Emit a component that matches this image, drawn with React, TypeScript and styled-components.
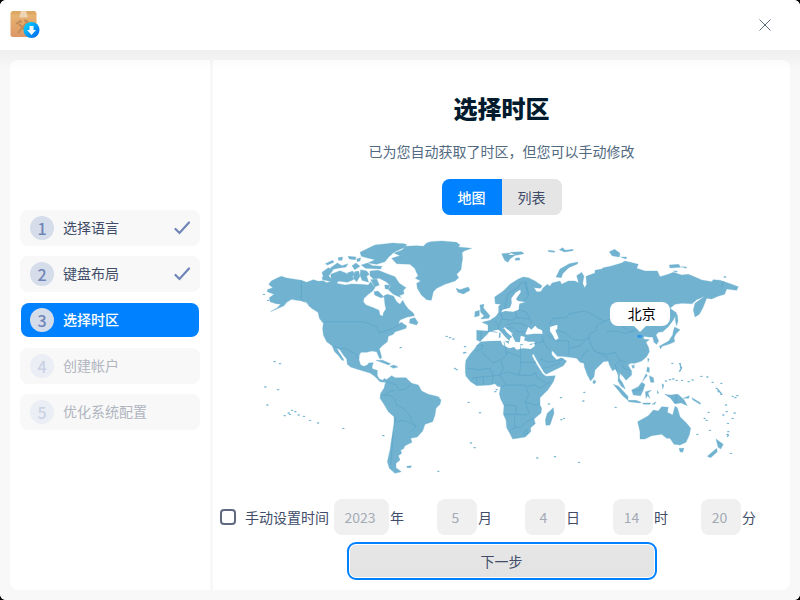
import React, { useState } from 'react';
import styled, { createGlobalStyle, css } from 'styled-components';

const GlobalStyle = createGlobalStyle`
  * { box-sizing: border-box; }
  body {
    margin: 0;
    background: #000;
    color: #414d68;
    font-family: "Noto Sans CJK SC", "Noto Sans", sans-serif;
    font-size: 14px;
    line-height: 20px;
  }
  button, input { font: inherit; color: inherit; }
`;

const Window = styled.div`
  display: flex;
  flex-direction: column;
  min-height: 100vh;
  border-radius: 6px;
  background: #f8f8f8;
  overflow: hidden;
`;

const TitleBar = styled.header`
  display: flex;
  align-items: center;
  justify-content: space-between;
  height: 50px;
  padding: 0 10px;
  background: #fff;
`;

const CloseButton = styled.button`
  display: flex;
  align-items: center;
  justify-content: center;
  width: 50px;
  height: 50px;
  padding: 0;
  border: 0;
  background: none;
`;

const Body = styled.div`
  display: flex;
  flex: 1;
  gap: 3px;
  padding: 10px;
  background: linear-gradient(#efefef, #f8f8f8 20px);
`;

const panel = css`
  background: linear-gradient(#fbfbfb, #fff 10px);
`;

const Sidebar = styled.nav`
  ${panel}
  display: flex;
  flex-direction: column;
  justify-content: center;
  flex: 0 0 200px;
  padding: 0 10px 10px;
  border-radius: 8px 0 0 8px;
`;

const StepList = styled.ol`
  display: flex;
  flex-direction: column;
  gap: 10px;
  margin: 0;
  padding: 0;
  list-style: none;
`;

type StepState = 'done' | 'current' | 'pending';

const StepItem = styled.li<{ $state: StepState }>`
  display: flex;
  align-items: center;
  height: 36px;
  padding: 0 10px;
  border-radius: 8px;
  background: #f8f8f8;
  color: ${(p) => (p.$state === 'pending' ? '#b0b5bf' : '#414d68')};
  ${(p) =>
    p.$state === 'current' &&
    css`
      height: 34px;
      margin: 1px;
      padding: 0 9px;
      background: #0081ff;
      color: #fff;
      font-weight: 500;
    `}
`;

const StepNumber = styled.span<{ $state: StepState }>`
  display: flex;
  align-items: center;
  justify-content: center;
  width: 24px;
  height: 24px;
  margin-right: 9px;
  padding-bottom: 1px;
  border-radius: 50%;
  font-size: 16px;
  font-weight: 500;
  background: ${(p) => (p.$state === 'pending' ? '#ebeef5' : '#d5dcea')};
  color: ${(p) => (p.$state === 'pending' ? '#cad2e4' : '#6f85b8')};
`;

const StepLabel = styled.span`
  flex: 1;
  padding-bottom: 2px;
`;

const Content = styled.main`
  ${panel}
  display: flex;
  flex-direction: column;
  align-items: center;
  flex: 1;
  min-width: 0;
  padding: 30px 7px 10px;
  border-radius: 0 8px 8px 0;
`;

const Title = styled.h1`
  margin: 0 0 15px;
  font-size: 24px;
  line-height: 36px;
  font-weight: 900;
  color: #001a2e;
`;

const Subtitle = styled.p`
  margin: 0 0 18px;
  color: #526a7f;
`;

const Segmented = styled.div`
  display: flex;
  height: 36px;
  margin-bottom: 20px;
  border-radius: 8px;
  background: #e5e5e5;
  overflow: hidden;
`;

const Segment = styled.button<{ $active: boolean }>`
  width: 60px;
  padding: 0;
  border: 0;
  font-weight: ${(p) => (p.$active ? 500 : 400)};
  background: ${(p) => (p.$active ? '#0081ff' : '#e5e5e5')};
  color: ${(p) => (p.$active ? '#fff' : '#414d68')};
`;

const MapFrame = styled.div`
  position: relative;
  align-self: stretch;
  margin: 0 39px 19px;
`;

const MapSvg = styled.svg`
  display: block;
  width: 100%;
  height: auto;
`;

const Pin = styled.div`
  position: absolute;
  left: 78.5%;
  top: 39.6%;
  display: flex;
  flex-direction: column;
  align-items: center;
  transform: translate(-50%, -100%);
`;

const PinLabel = styled.span`
  width: 60px;
  border-radius: 8px;
  padding: 1px 0 3px 4px;
  background: #fff;
  color: #000;
  text-align: center;
`;

const PinTip = styled.span`
  border: 6px solid transparent;
  border-top-color: #fff;
  border-bottom: 0;
`;

const DateForm = styled.form`
  display: flex;
  align-items: center;
  align-self: stretch;
  height: 36px;
  margin-bottom: 7px;
`;

const ManualToggle = styled.label`
  display: flex;
  align-items: center;
  gap: 9px;
  margin-right: 5px;
  white-space: nowrap;
`;

const CheckBox = styled.input`
  appearance: none;
  width: 16px;
  height: 16px;
  margin: 0;
  border: 2px solid #5f6980;
  border-radius: 4px;
  background: #fff;
`;

const Field = styled.label`
  display: flex;
  align-items: center;
  gap: 1px;
  margin-right: 33px;
  &:last-child { margin-right: 0; }
`;

const FieldInput = styled.input<{ $wide?: boolean }>`
  width: ${(p) => (p.$wide ? 55 : 40)}px;
  height: 36px;
  padding: 0 3px 0 0;
  border: 0;
  border-radius: 8px;
  background: #f0f0f0;
  color: #a4aab6;
  text-align: center;
`;

const NextButton = styled.button`
  width: 310px;
  height: 38px;
  padding: 0;
  border: 2px solid #0081ff;
  border-radius: 9px;
  background: linear-gradient(#e6e6e6, #e3e3e3);
  box-shadow: inset 0 0 0 1px #fff;
`;

function InstallerIcon() {
  return (
    <svg width="30" height="30" viewBox="0 0 30 30" aria-hidden="true">
      <defs>
        <linearGradient id="box" x1="0" y1="0" x2="0" y2="1">
          <stop offset="0" stopColor="#e8b873" />
          <stop offset="1" stopColor="#dc9765" />
        </linearGradient>
        <linearGradient id="badge" x1="0" y1="0" x2="1" y2="1">
          <stop offset="0" stopColor="#00dcff" />
          <stop offset="1" stopColor="#0062ee" />
        </linearGradient>
      </defs>
      <rect x="0.5" y="1" width="26" height="26" rx="2.5" fill="url(#box)" />
      <path d="M2.500 1H24.500L26.500 4.500H0.500Z" fill="#dca964" />
      <path d="M11 1h5l1.500 5v2l-1-1-1 1-1-1-1 1-1-1-1 1-1-1-1 1V6z" fill="#eed3b5" />
      <g fill="none" stroke="#c08a58" strokeWidth="1.800">
        <path d="M8 23 17 12M9 14l7 7" />
        <path d="M6 14l4-3 2 1M14 10.500q4 0 5 4" />
      </g>
      <circle cx="21.500" cy="20" r="8" fill="url(#badge)" />
      <path d="M19.500 16h4v4H26l-4.500 5L17 20h2.500z" fill="#f4faff" />
    </svg>
  );
}

function CheckIcon() {
  return (
    <svg width="16" height="14" viewBox="0 0 16 14" fill="none" aria-hidden="true">
      <path d="M1.500 8 5.500 12 15 1.500" stroke="#6f85b8" strokeWidth="2.200" strokeLinecap="round" />
    </svg>
  );
}

const land = [
  // North America
  'M64 124L80 129 104 133 124 136 140 142 160 134 175 139 190 137 200 143 215 138 235 146 255 150 275 147 300 148 325 150 332 140 345 158 338 168 325 178 312 190 310 200 318 210 340 218 357 226 360 240 368 244 371 232 378 222 375 210 373 192 372 182 382 178 400 183 410 200 420 208 428 196 436 210 445 222 460 234 463 242 440 247 420 255 415 266 425 262 432 268 440 272 438 280 420 286 405 290 400 298 385 304 382 320 366 333 358 342 362 355 365 368 360 372 354 360 350 350 335 348 320 352 303 352 298 360 297 375 302 390 312 394 322 390 326 384 340 383 336 396 338 402 352 406 352 422 358 432 368 436 374 430 380 436 374 442 360 440 350 430 342 422 330 414 310 408 290 402 272 396 262 388 260 372 250 360 240 345 230 338 236 350 244 362 252 376 246 376 236 362 224 350 216 332 200 320 190 300 188 280 190 265 178 250 174 232 158 222 150 210 138 200 124 197 110 196 95 193 80 202 72 212 50 222 32 230 52 218 62 208 48 206 30 200 28 188 42 178 22 170 22 164 38 158 26 148 34 138 50 130Z',
  'M180 250L196 258 196 266 186 260ZM142 202L150 206 158 222 148 214ZM156 208L168 216 166 222ZM450 252L464 248 474 262 470 270 448 264Z',
  // Canadian Arctic
  'M300 52L320 42 345 30 400 24 440 28 436 36 402 52 386 66 375 80 350 88 324 84 345 74 326 70 304 64Z',
  'M330 108L355 106 385 118 405 125 418 145 438 158 430 166 432 176 418 182 424 188 400 178 385 164 392 152 378 140 358 130 340 132 330 122Z',
  'M212 118L240 107 262 116 276 112 280 134 262 142 235 138 214 134ZM186 112L205 98 220 104 206 122 190 126ZM196 86L218 76 222 82 202 90ZM212 98L232 84 246 92 264 86 258 96 234 100 214 104ZM264 64L288 66 286 74 268 72ZM290 72L302 68 300 78 292 80ZM276 92L288 84 300 94 284 104ZM304 90L322 84 338 92 366 94 362 102 316 100ZM284 110L296 108 300 124 290 140 280 130ZM302 104L320 108 328 118 320 124 326 142 306 136 300 120ZM332 134L350 132 358 150 344 156ZM342 170L354 168 372 186 362 188 344 180ZM374 150L390 150 386 162 376 162ZM234 68L248 66 246 76 236 76Z',
  'M186 126L206 122 216 134 236 138 230 144 206 138 188 134ZM262 114L278 108 284 118 276 126Z',
  // Greenland and Iceland
  'M395 70L420 62 402 54 425 46 438 34 470 32 490 34 500 24 512 20 545 18 590 22 600 30 595 36 635 40 612 48 606 54 608 70 605 88 603 104 590 118 596 128 585 138 555 148 530 160 520 170 514 196 500 194 484 180 472 160 470 145 482 138 466 130 474 122 464 100 450 88 430 87 410 86Z',
  'M588 160L600 164 625 156 630 166 610 177 594 172ZM420 26L432 26 438 32 420 38Z',
  // South America
  'M378 435L395 422 405 428 438 428 455 445 475 450 485 468 505 478 535 485 543 495 540 508 528 520 525 540 518 560 495 568 488 588 472 606 452 610 456 622 435 632 430 642 422 645 425 655 415 662 420 675 408 685 408 698 424 710 405 715 388 700 382 680 390 645 395 610 402 575 402 545 385 530 372 508 360 490 362 475 372 460Z',
  'M348 376L368 376 392 386 386 390 364 382ZM390 394L402 390 414 396 400 400ZM360 362L366 368M440 694L454 692 452 698 442 698Z',
  // Europe, Asia and Africa
  'M650 286L684 288 684 270 666 262 690 256 708 244 716 232 716 214 722 208 706 206 704 186 730 168 750 148 775 132 790 126 805 128 825 138 846 152 842 160 822 158 830 170 842 170 850 158 862 148 870 154 876 144 900 138 905 148 925 138 945 138 956 144 950 122 965 112 972 124 968 145 974 158 980 148 978 124 1005 114 1005 106 1025 102 1030 98 1052 94 1085 84 1095 78 1135 88 1130 100 1155 108 1192 108 1200 125 1225 118 1240 112 1265 120 1285 118 1310 128 1325 135 1355 140 1360 134 1380 136 1398 142 1435 155 1430 166 1400 162 1394 178 1374 184 1355 192 1340 190 1328 220 1318 238 1305 246 1300 225 1305 205 1334 184 1310 194 1296 206 1265 205 1245 208 1230 220 1250 234 1240 255 1225 275 1208 290 1195 292 1188 300 1196 318 1190 328 1182 322 1178 306 1165 306 1152 304 1150 312 1168 314 1158 322 1166 338 1168 350 1160 365 1145 378 1125 385 1112 385 1104 390 1115 408 1115 420 1098 436 1090 425 1080 415 1078 430 1088 444 1096 462 1084 454 1074 438 1075 415 1065 402 1058 408 1048 390 1045 378 1030 380 1005 405 1002 425 992 438 982 420 973 395 972 385 960 382 950 370 930 367 905 364 892 364 880 350 874 346 876 360 890 374 904 368 920 378 910 392 890 402 858 418 852 412 832 378 820 356 816 362 830 388 848 416 858 424 886 422 880 440 864 464 840 488 840 510 845 520 843 534 822 552 826 566 812 578 812 590 796 606 758 612 752 600 740 578 738 555 730 538 732 512 722 492 718 476 722 455 712 454 705 446 690 450 650 452 632 440 618 424 616 412 616 390 618 375 630 358 645 340 650 332 662 320 650 315Z',
  // British Isles and Arctic archipelagos
  'M660 210L672 208 670 218 676 226 690 242 686 250 662 252 672 242 662 232ZM645 230L658 226 658 242 644 246Z',
  'M725 56L752 54 745 60 766 60 750 72 744 82 734 76ZM750 52L785 50 792 56 768 61ZM766 70L778 68 780 75 766 76ZM864 46L884 48 884 52 866 50ZM898 44L908 38 916 46 940 43 938 47 914 51ZM888 126L900 102 928 86 954 81 952 87 926 98 908 116 904 128ZM1048 50L1064 43 1080 55 1078 66 1056 62ZM1082 66L1100 66 1098 72ZM1228 90L1256 88 1262 97 1230 99ZM1264 95L1280 96 1278 100ZM1240 108L1252 108 1250 112ZM1390 126L1396 123 1398 128Z',
  // East Asia
  'M1246 235L1252 240 1254 258 1250 272 1246 258ZM1244 276L1260 284 1248 296 1242 308 1244 320 1226 328 1206 334 1202 342 1198 334 1226 318 1238 300 1240 288ZM1163 370L1168 372 1164 382ZM1114 392L1124 390 1120 398Z',
  'M1162 396L1168 398 1168 412 1160 410ZM1168 422L1180 428 1182 442 1172 442ZM1158 416L1162 422 1148 438ZM1002 434L1008 440 1004 446 998 444Z',
  // Indonesia and New Guinea
  'M1060 448L1076 454 1104 484 1104 496 1088 482ZM1104 496L1128 496 1144 502 1140 504 1106 500ZM1115 465L1135 455 1145 442 1155 448 1150 465 1142 482 1120 480ZM1156 470L1174 466 1164 474 1170 490 1162 482 1158 490ZM1148 504L1172 504 1170 508 1150 508ZM1176 508L1188 500 1184 508ZM1192 466L1196 474 1192 476ZM1206 446L1212 450 1208 462ZM1214 478L1230 480 1254 478 1272 494 1282 512 1264 504 1244 506 1232 490ZM1270 490L1288 482 1286 490ZM1296 488L1322 504 1320 508 1298 494Z',
  // Australia, New Zealand and Madagascar
  'M1133 560L1165 542 1180 525 1195 528 1205 515 1225 517 1222 532 1238 540 1245 514 1252 518 1260 545 1280 565 1292 580 1288 600 1278 622 1260 630 1242 628 1230 610 1220 610 1205 598 1175 602 1155 612 1140 612 1140 590ZM1257 640L1272 640 1268 652 1260 650Z',
  'M1368 612L1390 628 1382 642 1374 636ZM1370 640L1372 650 1352 668 1342 664ZM880 518L882 535 870 570 858 571 856 555 862 535Z',
].join('');

const seas = [
  // Mediterranean
  'M660 320L668 312 682 298 688 290 712 284 722 286 734 277 744 284 760 298 766 318 780 322 782 302 795 306 792 316 805 320 824 320 824 334 812 342 790 340 770 344 762 336 748 340 728 330 722 317 690 318Z',
  // Black Sea and Caspian
  'M796 296L805 276 814 284 826 272 832 280 846 286 848 296 822 296 800 299ZM870 276L892 269 892 282 886 286 896 310 886 316 878 300 870 288Z',
  // Baltic
  'M781 164L768 172 754 190 755 205 750 218 728 224 724 232 736 228 760 230 776 224 778 206 796 201 774 198 768 192 782 172Z',
].join('');

const mediterraneanIslands =
  'M716 284L732 280 740 292 757 306 750 310 748 318 734 304 724 292ZM734 318L747 318 746 326ZM718 292L722 294 721 308 716 308ZM780 328L790 328 788 331 780 331ZM808 328L818 325 814 331ZM754 296L776 298 772 308 776 322 766 320Z';

const borders =
  'M124 136V197L138 202 150 214M194 260H305L322 264 350 276 358 294 376 288 398 280 416 270M222 334L240 340 262 342 276 352 286 356 296 372' +
  'M378 440L410 450 416 466 438 462 452 446M362 480L390 482 404 492 410 510 430 520 448 540 454 556 468 572 454 590M408 545L400 580 396 640 392 690M410 560L430 556 448 562 468 574M372 480L388 470 404 466' +
  'M650 332L668 330 668 340 648 350M664 350L700 384 722 374 740 360 732 320M722 374L730 400 720 420M782 334V400L774 420M782 382H828M740 350L782 366M690 400L700 424 696 446M620 400L660 404 690 400M636 430L660 426 690 424 720 420 740 410 774 420 810 422 830 412M650 426V448M670 426V448M720 420L738 450 724 456M738 450H796L806 480 796 500 806 530M732 510L768 512 768 538 732 538M768 538L800 540 812 528M764 540V580L750 584M764 576L780 578 800 560 822 550M796 500L830 512 840 504M800 454L824 450 840 460 872 440M826 412L834 430 860 444M790 592L800 584 804 594 794 598Z' +
  'M664 288L662 314M684 288L712 292M704 258L716 270 714 284M722 232L728 252 716 270M728 252L756 256 770 248 768 230M740 270L760 264 786 266 800 274M740 280L760 278 772 290 796 290M770 248L810 252 816 264M776 224L800 232 810 252M792 200L806 180 798 140 780 146 772 160M770 160L744 176 738 200 734 222M796 140L802 180' +
  'M868 268L878 250 920 248 926 238 950 232 976 228 1000 240 1020 252 1034 258 1052 252 1110 290 1150 280 1170 262M1034 258L1010 272 1008 288 990 296 986 310 998 340 1010 352 1040 358 1066 352 1080 376 1100 382M892 286L916 294 940 314 966 316 990 308M1040 290L1070 288 1094 294 1120 290M862 300L890 318 924 316 928 340 924 360M930 340L960 332 976 316M960 376L976 350 988 344M820 326L850 320 862 340 876 350M840 370L860 380 880 380 912 372M846 304L852 322M848 400L880 392 900 384M1000 346L1040 366 1048 380M1080 376L1066 390 1074 420M1084 384L1094 402 1110 406M1390 138L1386 156M1118 468L1140 464 1150 450M1248 478V506';

const islets = [
  [12, 178], [24, 196], [44, 380], [60, 386], [16, 456], [54, 464], [22, 510], [74, 542], [86, 534], [96, 526], [106, 530], [132, 544], [150, 556], [174, 564], [90, 538], [116, 540], [250, 580], [370, 602], [422, 338],
  [560, 304], [570, 308], [580, 312], [585, 400], [590, 404], [615, 335], [612, 354], [616, 352], [626, 502], [660, 533], [633, 624], [644, 638], [535, 709], [867, 507], [903, 488], [904, 554], [912, 550], [832, 669], [885, 665], [957, 682],
  [706, 470], [710, 464], [973, 472], [970, 498], [1067, 517], [1120, 398], [1237, 385], [1260, 386], [1263, 398], [1218, 438], [1230, 434], [1240, 432], [1250, 436], [1266, 436], [1286, 440], [1298, 435], [1324, 424], [1342, 426], [1358, 442], [1384, 445],
  [1370, 460], [1376, 470], [1384, 478], [1418, 484], [1432, 482], [1426, 488], [1398, 510], [1400, 530], [1390, 540], [1424, 534], [1418, 550], [1404, 565], [1334, 550], [1340, 556], [1346, 532], [1350, 586], [1405, 590], [1402, 598], [1413, 655], [1312, 598],
];

function WorldMap() {
  return (
    <MapSvg viewBox="-3 0 1455 735" role="img" aria-label="世界地图">
      <g fill="#70b2d0">
        <path d={land} stroke="#70b2d0" />
        <path d={seas} fill="#fff" />
        <path d={mediterraneanIslands} />
        {islets.map(([x, y]) => (
          <ellipse key={`${x}-${y}`} cx={x} cy={y} rx="4" ry="2" />
        ))}
        <path d="M1260 388L1264 400 1258 410M1372 462L1386 478M1406 598L1402 606" fill="none" stroke="#70b2d0" strokeWidth="4" />
      </g>
      <path d={borders} fill="none" stroke="#5aa3c8" strokeWidth="2" />
      <ellipse cx="1139" cy="304" rx="8" ry="5" fill="#2f97e8" />
    </MapSvg>
  );
}

const steps: { label: string; state: StepState }[] = [
  { label: '选择语言', state: 'done' },
  { label: '键盘布局', state: 'done' },
  { label: '选择时区', state: 'current' },
  { label: '创建帐户', state: 'pending' },
  { label: '优化系统配置', state: 'pending' },
];

const fields = [
  { value: '2023', unit: '年', wide: true },
  { value: '5', unit: '月' },
  { value: '4', unit: '日' },
  { value: '14', unit: '时' },
  { value: '20', unit: '分' },
];

export default function App() {
  const [manual, setManual] = useState(false);

  return (
    <>
      <GlobalStyle />
      <Window>
        <TitleBar>
          <InstallerIcon />
          <CloseButton type="button" aria-label="关闭">
            <svg width="12" height="12" viewBox="0 0 12 12" aria-hidden="true">
              <path d="M0.500 0.500 11.500 11.500M11.500 0.500 0.500 11.500" stroke="#5c6b80" />
            </svg>
          </CloseButton>
        </TitleBar>
        <Body>
          <Sidebar>
            <StepList>
              {steps.map((step, i) => (
                <StepItem
                  key={step.label}
                  $state={step.state}
                  aria-current={step.state === 'current' ? 'step' : undefined}
                >
                  <StepNumber $state={step.state}>{i + 1}</StepNumber>
                  <StepLabel>{step.label}</StepLabel>
                  {step.state === 'done' && <CheckIcon />}
                </StepItem>
              ))}
            </StepList>
          </Sidebar>
          <Content>
            <Title>选择时区</Title>
            <Subtitle>已为您自动获取了时区，但您可以手动修改</Subtitle>
            <Segmented>
              <Segment type="button" $active aria-pressed="true">地图</Segment>
              <Segment type="button" $active={false} aria-pressed="false">列表</Segment>
            </Segmented>
            <MapFrame>
              <WorldMap />
              <Pin>
                <PinLabel>北京</PinLabel>
                <PinTip />
              </Pin>
            </MapFrame>
            <DateForm>
              <ManualToggle>
                <CheckBox type="checkbox" checked={manual} onChange={(e) => setManual(e.target.checked)} />
                手动设置时间
              </ManualToggle>
              {fields.map((f) => (
                <Field key={f.unit}>
                  <FieldInput type="text" $wide={f.wide} defaultValue={f.value} disabled={!manual} />
                  {f.unit}
                </Field>
              ))}
            </DateForm>
            <NextButton type="button">下一步</NextButton>
          </Content>
        </Body>
      </Window>
    </>
  );
}
